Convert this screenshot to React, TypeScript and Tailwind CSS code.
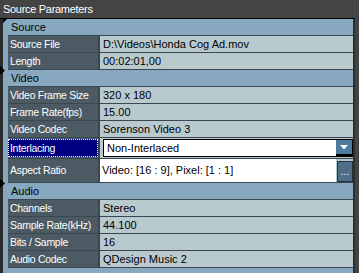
import React from 'react';

const LINE = 'border-b border-[#3a4750]';
const LABEL = 'w-[92px] shrink-0 bg-[#4b5a63] text-white pl-[2px] border-r-2 border-[#3a4750] flex items-center whitespace-nowrap overflow-hidden text-[10.5px] tracking-[-0.3px]';
const VALUE = 'flex-1 bg-[#b9cacf] text-black pl-[3px] flex items-center whitespace-nowrap';

type Item = { label: string; value: string };

function Header({ title }: { title: string }) {
  return <div className={`h-[17px] pl-[3px] flex items-center text-black ${LINE}`}>{title}</div>;
}

function Row({ label, value }: Item) {
  return (
    <div className={`h-[17px] flex ${LINE}`}>
      <div className={LABEL}>{label}</div>
      <div className={VALUE}>{value}</div>
    </div>
  );
}

function Marker({ top }: { top: number }) {
  return (
    <svg className="absolute left-0" style={{ top }} width="6" height="9" viewBox="0 0 6 9">
      <path d="M0 0 L5 4.5 L0 9 Z" fill="#000" />
    </svg>
  );
}

const source: Item[] = [
  { label: 'Source File', value: 'D:\\Videos\\Honda Cog Ad.mov' },
  { label: 'Length', value: '00:02:01,00' },
];

const video: Item[] = [
  { label: 'Video Frame Size', value: '320 x 180' },
  { label: 'Frame Rate(fps)', value: '15.00' },
  { label: 'Video Codec', value: 'Sorenson Video 3' },
];

const audio: Item[] = [
  { label: 'Channels', value: 'Stereo' },
  { label: 'Sample Rate(kHz)', value: '44.100' },
  { label: 'Bits / Sample', value: '16' },
  { label: 'Audio Codec', value: 'QDesign Music 2' },
];

export default function App() {
  return (
    <div className="w-[359px] h-[273px] overflow-hidden bg-[#444444] flex flex-col text-[11px] leading-none" style={{ fontFamily: '"Liberation Sans", Arial, sans-serif' }}>
      <div className="h-[18px] shrink-0 pl-[3px] flex items-center text-white text-[11px] tracking-[-0.3px]">Source Parameters</div>
      <div className="relative flex-1 flex border-t border-black mr-[4px]">
        <div className="w-[3px] bg-[#2b2b2b]" />
        <div className="flex-1 bg-[#87a8bf] pl-[5px] border-r-2 border-[#2e2e2e]">
          <Header title="Source" />
          {source.map(r => <Row key={r.label} {...r} />)}
          <Header title="Video" />
          {video.map(r => <Row key={r.label} {...r} />)}

          {/* editable row: dropdown */}
          <div className={`h-[21px] flex ${LINE}`}>
            <div className="w-[92px] shrink-0 border-r-2 border-[#3a4750] bg-[#4b5a63] py-[1px]">
              <div className="h-full bg-[#000080] text-white pl-[1px] flex items-center border border-dotted border-white text-[10.5px] tracking-[-0.3px]">Interlacing</div>
            </div>
            <div className="flex-1 bg-[#b9cacf] pl-[3px] py-[1px]">
              <div className="h-full bg-white border border-black flex items-center">
                <span className="flex-1 pl-[3px] text-black">Non-Interlaced</span>
                <div className="w-[16px] h-full bg-[#4e7c9e] border-b-2 border-black flex items-center justify-center">
                  <svg width="8" height="5" viewBox="0 0 8 5"><path d="M0 0 H8 L4 4.5 Z" fill="#fff" /></svg>
                </div>
              </div>
            </div>
          </div>

          {/* editable row: ellipsis button */}
          <div className={`h-[24px] flex ${LINE}`}>
            <div className={LABEL}>Aspect Ratio</div>
            <div className="flex-1 flex bg-[#b9cacf]">
              <div className="flex-1 bg-white pl-[2px] flex items-center text-black whitespace-nowrap">Video: [16 : 9], Pixel: [1 : 1]</div>
              <div className="w-[16px] ml-[1px] mt-[2px] bg-[#4f6f88] border border-[#26343e] text-white flex items-end justify-center pb-[4px] text-[10px]">...</div>
            </div>
          </div>

          <Header title="Audio" />
          {audio.map(r => <Row key={r.label} {...r} />)}
        </div>
        <svg className="absolute left-[3px] top-0" width="4" height="4" viewBox="0 0 4 4">
          <path d="M0 0 H4 L0 4 Z" fill="#000" />
        </svg>
        <Marker top={47} />
        <Marker top={160} />
      </div>
    </div>
  );
}
